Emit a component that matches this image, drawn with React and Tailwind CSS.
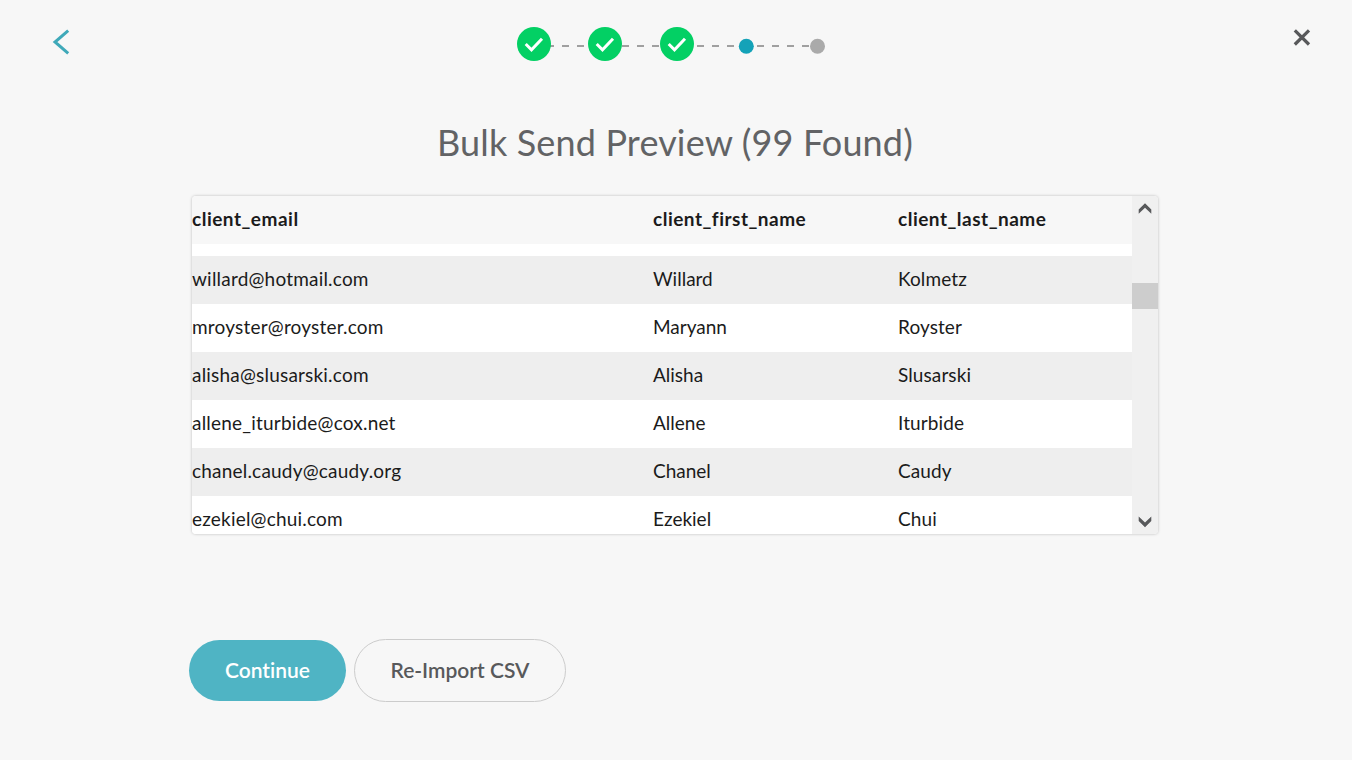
import React from "react";
import clsx from "clsx";

const contacts = [
  { email: "willard@hotmail.com", first: "Willard", last: "Kolmetz" },
  { email: "mroyster@royster.com", first: "Maryann", last: "Royster" },
  { email: "alisha@slusarski.com", first: "Alisha", last: "Slusarski" },
  { email: "allene_iturbide@cox.net", first: "Allene", last: "Iturbide" },
  { email: "chanel.caudy@caudy.org", first: "Chanel", last: "Caudy" },
  { email: "ezekiel@chui.com", first: "Ezekiel", last: "Chui" },
];

const Stepper = () => (
  <svg className="mt-[26px] h-9 w-[310px]" viewBox="516 26 310 36" fill="none">
    <path d="M547 46H810" stroke="#a0a0a0" strokeWidth="2" strokeDasharray="7 8" />
    {[534, 605, 677].map((cx) => (
      <g key={cx}>
        <circle cx={cx} cy="44" r="17" fill="#03d064" />
        <path d={`M${cx - 8.3} 44l5.8 5.8L${cx + 8} 38.8`} stroke="#fff" strokeWidth="3" />
      </g>
    ))}
    <circle cx="746.3" cy="46.3" r="7.5" fill="#14a2b8" />
    <circle cx="817.5" cy="46.3" r="7.5" fill="#aaaaaa" />
  </svg>
);

const Header = () => (
  <header className="flex h-[100px] items-start pl-[52px] pr-[41px]">
    <button className="mt-[29px] w-[18px]">
      <svg className="h-[26px] w-[18px]" viewBox="0 0 18 26" fill="none">
        <path d="M16.2 1.6L3 13L16.2 24.4" stroke="#3fa9b9" strokeWidth="3" />
      </svg>
    </button>
    <div className="ml-[446px]">
      <Stepper />
    </div>
    <button className="mt-[28px] ml-auto w-[18px]">
      <svg className="h-[18px] w-[18px]" viewBox="0 0 18 18" fill="none">
        <path d="M1.8 2.3L16 16.5M16 2.3L1.8 16.5" stroke="#58595b" strokeWidth="3.2" />
      </svg>
    </button>
  </header>
);

const Row = ({ contact, striped }) => (
  <div className={clsx("grid h-12 shrink-0 grid-cols-[461px_245px_1fr] items-center pb-0.5", striped ? "bg-[#eeeeee]" : "bg-white")}>
    <span className="tracking-[0.2px]">{contact.email}</span>
    <span>{contact.first}</span>
    <span className="tracking-[0.1px]">{contact.last}</span>
  </div>
);

const Scrollbar = () => (
  <div className="flex w-[26px] shrink-0 flex-col items-center bg-[#f0f0f0]">
    <svg className="mt-1.5 h-3 w-3.5" viewBox="0 0 14 12">
      <path d="M7 1.2L13.3 7.5V11.8L7 5.8L0.7 11.8V7.5Z" fill="#58595b" />
    </svg>
    <div className="mt-[69px] h-[26px] w-full bg-[#cdcdcd]" />
    <svg className="mt-auto mb-1.5 h-3 w-3.5" viewBox="0 0 14 12">
      <path d="M7 11.2L13.3 4.9V0.6L7 6.6L0.7 0.6V4.9Z" fill="#58595b" />
    </svg>
  </div>
);

const PreviewTable = () => (
  <div className="ml-[192px] mt-[31px] flex h-[338px] w-[966px] overflow-hidden rounded-[4px] bg-white text-[19px] text-[#1b1b1b] shadow-[0_0_3px_rgba(0,0,0,0.25)]">
    <div className="flex flex-1 flex-col overflow-hidden">
      <div className="mb-3 grid h-12 shrink-0 grid-cols-[461px_245px_1fr] items-center bg-[#f7f7f7] pb-0.5 font-bold tracking-[0.5px]">
        <span>client_email</span>
        <span>client_first_name</span>
        <span>client_last_name</span>
      </div>
      {contacts.map((contact, i) => (
        <Row key={contact.email} contact={contact} striped={i % 2 === 0} />
      ))}
    </div>
    <Scrollbar />
  </div>
);

const App = () => {
  return (
    <div className="h-[760px] w-full overflow-hidden bg-[#f7f7f7] font-['Lato',sans-serif] [font-variant-ligatures:none]">
      <Header />
      <h1 className="mt-5 h-[45px] pr-0.5 text-center text-[36px] leading-[45px] tracking-[0.15px] text-[#626365]">
        Bulk Send Preview (99 Found)
      </h1>
      <PreviewTable />
      <div className="mt-[105px] flex items-center gap-2 pl-[189px] text-[21px] font-semibold">
        <button className="h-[61px] w-[157px] rounded-full bg-[#4fb4c4] pb-0.5 text-white">Continue</button>
        <button className="h-[63px] w-[212px] rounded-full border border-[#cccccc] pb-0.5 text-[#58595b]">Re-Import CSV</button>
      </div>
    </div>
  );
};

export default App;
